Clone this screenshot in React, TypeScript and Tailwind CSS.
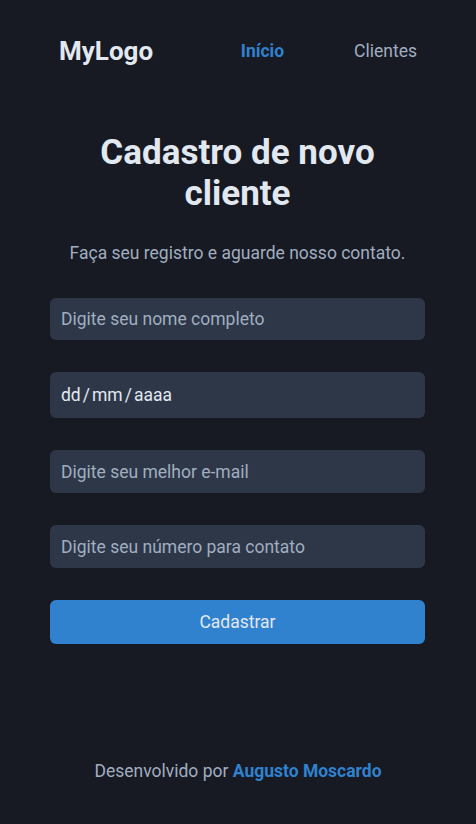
import React from "react";

export default function App() {
  return (
    <div className="min-h-[824px] bg-[#171923] flex flex-col" style={{ fontFamily: "Roboto, 'Noto Sans', sans-serif" }}>
      <header className="flex items-center justify-between px-[59px] h-[102px]">
        <div className="text-[26px] font-bold text-[#E2E8F0]">MyLogo</div>
        <nav className="flex items-center gap-[70px] text-[17.5px]">
          <a className="font-bold text-[#3182CE]">Início</a>
          <a className="text-[#A0AEC0]">Clientes</a>
        </nav>
      </header>
      <main className="w-[375px] ml-[50px] flex flex-col items-center mt-[30px]">
        <h1 className="text-[35px] font-bold text-[#E2E8F0] text-center leading-[41px] px-8">Cadastro de novo cliente</h1>
        <p className="text-[17.5px] text-[#A0AEC0] mt-[26px]">Faça seu registro e aguarde nosso contato.</p>
        <div className="w-full flex flex-col gap-8 mt-[32px]">
          <div className="h-[42px] rounded-md bg-[#2D3748] flex items-center px-[11px] text-[17.5px] text-[#A0AEC0]">Digite seu nome completo</div>
          <div className="h-[46px] rounded-md bg-[#2D3748] flex items-center px-[11px] text-[17.5px] text-[#E2E8F0]">
            <span>dd</span><span className="mx-[2px]">/</span><span>mm</span><span className="mx-[2px]">/</span><span>aaaa</span>
          </div>
          <div className="h-[43px] rounded-md bg-[#2D3748] flex items-center px-[11px] text-[17.5px] text-[#A0AEC0]">Digite seu melhor e-mail</div>
          <div className="h-[43px] rounded-md bg-[#2D3748] flex items-center px-[11px] text-[17.5px] text-[#A0AEC0]">Digite seu número para contato</div>
          <button className="h-[44px] rounded-md bg-[#3182CE] text-[17.5px] text-[#E2E8F0]">Cadastrar</button>
        </div>
      </main>
      <footer className="mt-auto h-[106px] flex items-center justify-center text-[17.5px] text-[#A0AEC0]">
        <span>Desenvolvido por <span className="font-bold text-[#3182CE]">Augusto Moscardo</span></span>
      </footer>
    </div>
  );
}
